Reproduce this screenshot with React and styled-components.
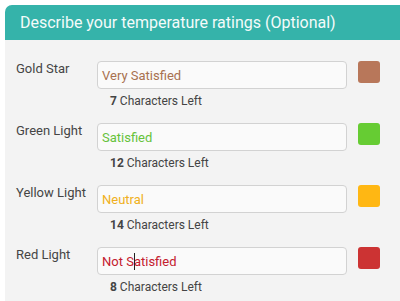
import React from "react";
import styled, { createGlobalStyle } from "styled-components";

const Global = createGlobalStyle`
  html, body { margin: 0; padding: 0; background: #ffffff; }
  body { font-family: Roboto, "Liberation Sans", Arial, sans-serif; }
  * { box-sizing: border-box; }
`;

const Page = styled.div`
  width: 400px;
  height: 301px;
  overflow: hidden;
  padding: 5px 0 0 5px;
`;

const Panel = styled.section`
  width: 420px;
  height: 320px;
  background: #f3f3f3;
  border-top-left-radius: 7px;
  overflow: hidden;
`;

const Header = styled.h2`
  margin: 0;
  height: 35px;
  background: #35b3aa;
  color: #f4fbfa;
  font-weight: 400;
  font-size: 16px;
  line-height: 35px;
  padding-left: 15px;
  letter-spacing: 0;
`;

const Body = styled.div`
  display: flex;
  flex-direction: column;
  gap: 14px;
  padding: 21px 0 0 11px;
`;

const Row = styled.div`
  display: grid;
  grid-template-columns: 70px 250px 22px;
  column-gap: 11px;
  row-gap: 4px;
  align-items: start;
`;

const Label = styled.label`
  font-size: 13px;
  color: #454545;
  padding-top: 0px;
  line-height: 16px;
  white-space: nowrap;
`;

const Field = styled.div`
  height: 28px;
  border: 1px solid #d2d2d2;
  border-radius: 4px;
  background: #fafafa;
  padding: 0 4px;
  display: flex;
  align-items: center;
  font-size: 13px;
  color: ${(p) => p.$color};
  white-space: nowrap;
`;

const Caret = styled.span`
  display: inline-block;
  width: 1px;
  height: 17px;
  background: #222;
  margin: 0 -1px 0 0;
  vertical-align: middle;
`;

const Swatch = styled.div`
  width: 22px;
  height: 22px;
  border-radius: 3px;
  background: ${(p) => p.$bg};
`;

const Helper = styled.div`
  grid-column: 2;
  padding-left: 13px;
  font-size: 12px;
  line-height: 16px;
  color: #444;
  b { font-weight: 700; }
`;

const rows = [
  { label: "Gold Star", text: "Very Satisfied", color: "#a8714f", swatch: "#b8775a", left: 7 },
  { label: "Green Light", text: "Satisfied", color: "#66c23a", swatch: "#66cc33", left: 12 },
  { label: "Yellow Light", text: "Neutral", color: "#f0b020", swatch: "#ffb713", left: 14 },
  { label: "Red Light", text: "Not Satisfied", color: "#c4202e", swatch: "#cc3333", left: 8, caret: 5 },
];

export default function App() {
  return (
    <Page>
      <Global />
      <Panel>
        <Header>Describe your temperature ratings (Optional)</Header>
        <Body>
          {rows.map((r) => (
            <Row key={r.label}>
              <Label>{r.label}</Label>
              <Field $color={r.color}>
                {r.caret ? (
                  <>
                    {r.text.slice(0, r.caret)}
                    <Caret />
                    {r.text.slice(r.caret)}
                  </>
                ) : (
                  r.text
                )}
              </Field>
              <Swatch $bg={r.swatch} />
              <Helper>
                <b>{r.left}</b> Characters Left
              </Helper>
            </Row>
          ))}
        </Body>
      </Panel>
    </Page>
  );
}
